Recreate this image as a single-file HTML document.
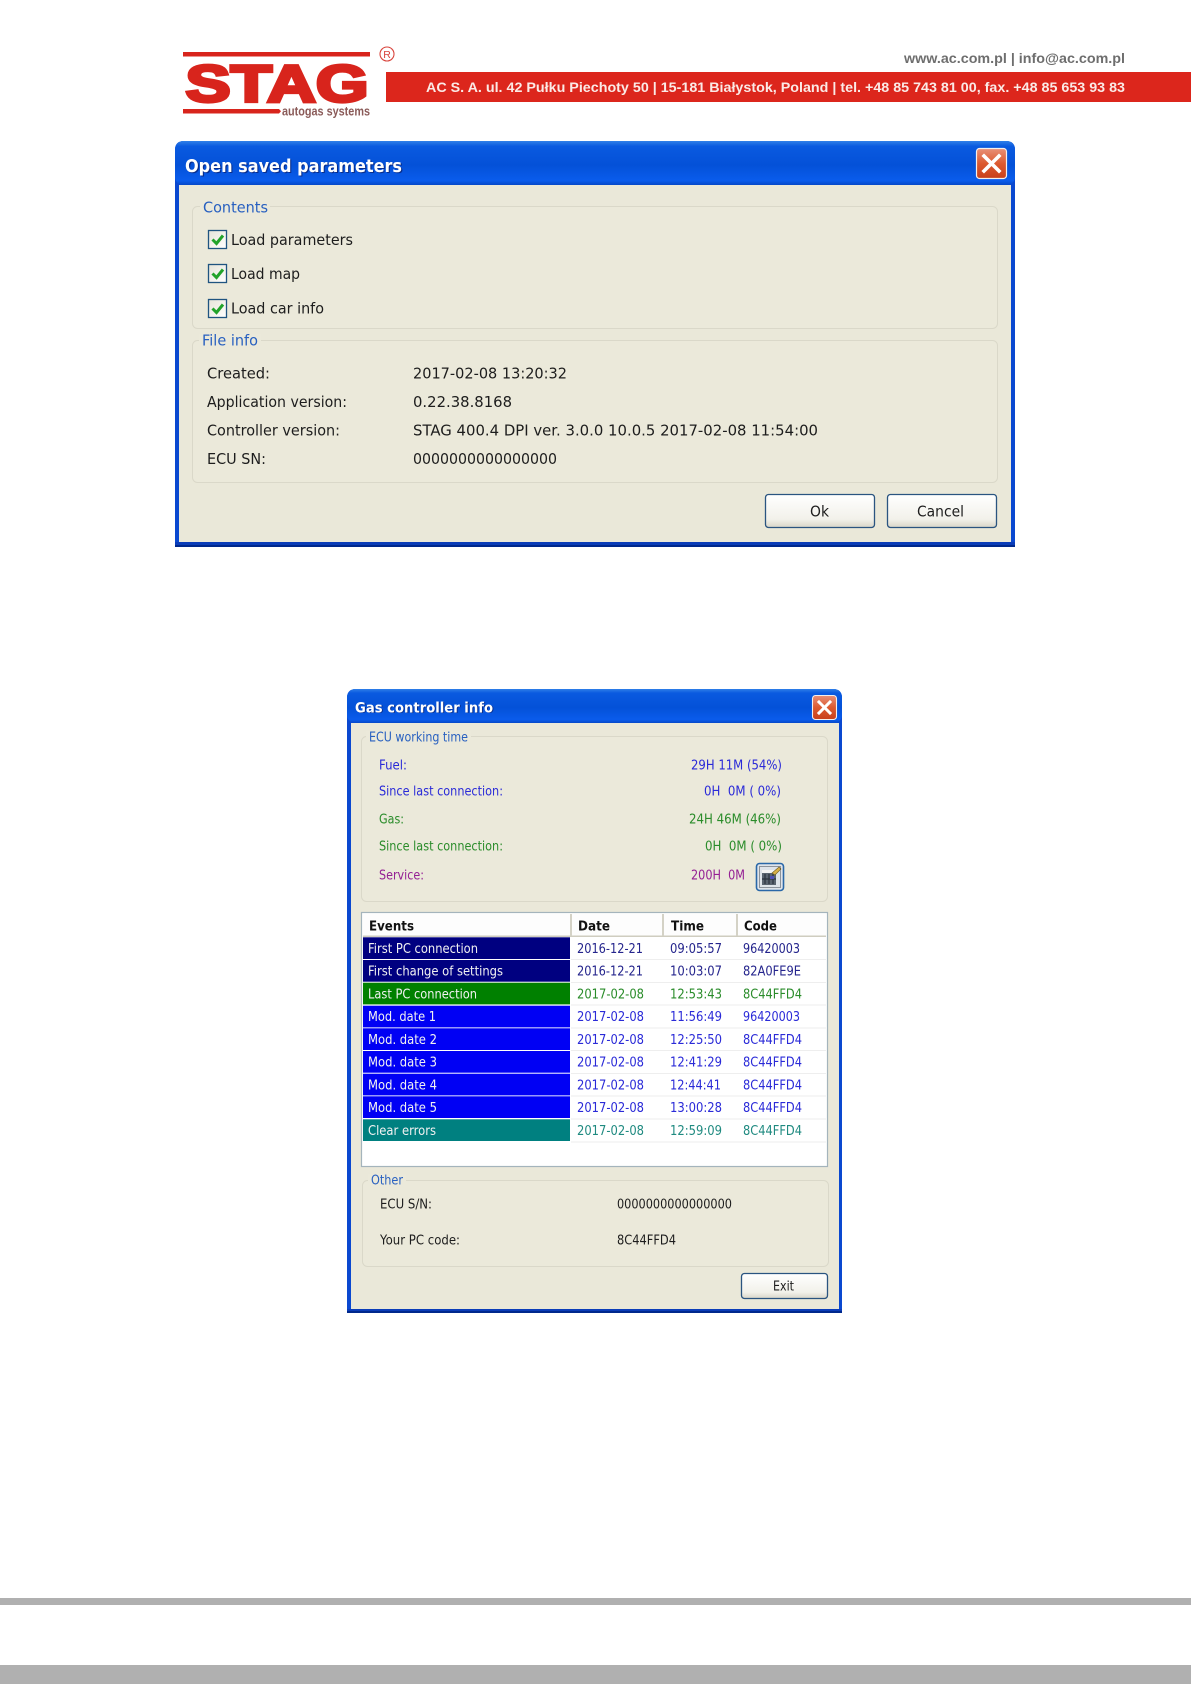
<!DOCTYPE html>
<html><head><meta charset="utf-8"><title>STAG</title>
<style>
html,body{margin:0;padding:0;background:#fff;width:1191px;height:1684px;overflow:hidden}
svg{display:block;filter:blur(.35px)}
text{font-family:"DejaVu Sans","Liberation Sans",sans-serif;white-space:pre}
text:not(.t):not(.lb):not(.l1):not(.l2):not(.b){transform:translateY(-1px)}
.a{font-size:15px;fill:#1d1d1d}
.b{font-size:13px;fill:#1d1d1d}
.l1{font-size:15px;fill:#2860c0}
.l2{font-size:13px;fill:#2860c0}
.t{font-weight:bold;fill:#fff}
.h{font-size:13px;font-weight:bold;fill:#111}
.w{font-size:13px;fill:#f2f2f2}
.bl{font-size:13px;fill:#2a2ad8}
.nv{font-size:13px;fill:#24248c}
.gr{font-size:13px;fill:#2a8c2a}
.te{font-size:13px;fill:#1f8a80}
.pu{font-size:13px;fill:#941f94}
.lb{font-family:"Liberation Sans",sans-serif;font-weight:bold}
</style></head><body>
<svg xmlns="http://www.w3.org/2000/svg" width="1191" height="1684" viewBox="0 0 1191 1684">
<defs>
<linearGradient id="tb" x1="0" y1="0" x2="0" y2="1"><stop offset="0" stop-color="#2f7fe8"/><stop offset=".12" stop-color="#0a5ae0"/><stop offset=".55" stop-color="#0451d8"/><stop offset=".9" stop-color="#0a5cec"/><stop offset="1" stop-color="#0648c8"/></linearGradient>
<linearGradient id="cl" x1="0" y1="0" x2="0" y2="1"><stop offset="0" stop-color="#e89078"/><stop offset=".5" stop-color="#dc5a30"/><stop offset="1" stop-color="#c8401c"/></linearGradient>
<linearGradient id="bt" x1="0" y1="0" x2="0" y2="1"><stop offset="0" stop-color="#ffffff"/><stop offset=".75" stop-color="#f2f1ea"/><stop offset="1" stop-color="#d8d5c8"/></linearGradient>
<linearGradient id="cb" x1="0" y1="0" x2="1" y2="1"><stop offset="0" stop-color="#e6e4d8"/><stop offset="1" stop-color="#ffffff"/></linearGradient>
</defs>

<!-- LOGO -->
<rect x="183" y="52" width="187" height="4.5" fill="#d8241c"/>
<text class="lb" x="185.500" y="101.500" font-size="52" textLength="183" lengthAdjust="spacingAndGlyphs" fill="#d8241c" stroke="#d8241c" stroke-width="3.2">STAG</text>
<path d="M183 109H279L281 111.2L279 113.5H183Z" fill="#d8241c"/>
<text class="lb" x="282" y="115.500" font-size="12.500" textLength="88" lengthAdjust="spacingAndGlyphs" fill="#8a5a58">autogas systems</text>
<circle cx="387" cy="54" r="7" fill="none" stroke="#d8443c" stroke-width="1.1"/>
<text class="lb" x="387" y="58" font-size="10.500" text-anchor="middle" fill="#d8443c" style="font-weight:normal">R</text>
<rect x="386" y="72" width="805" height="30" fill="#dc261c"/>
<text class="lb" x="426" y="92" font-size="14" textLength="699" lengthAdjust="spacingAndGlyphs" fill="#fbeae6">AC S. A. ul. 42 Pułku Piechoty 50 | 15-181 Białystok, Poland | tel. +48 85 743 81 00, fax. +48 85 653 93 83</text>
<text class="lb" x="904" y="63" font-size="14" textLength="221" lengthAdjust="spacingAndGlyphs" fill="#6e6e6e">www.ac.com.pl | info@ac.com.pl</text>

<!-- DIALOG 1 -->
<path d="M175 547V150Q175 141 184 141H1006Q1015 141 1015 150V547Z" fill="#0a48d0"/>
<rect x="175" y="141" width="840" height="44" rx="8" fill="url(#tb)"/>
<rect x="175" y="542" width="840" height="5" fill="#0a3cb8"/>
<rect x="175" y="545" width="840" height="2" fill="#00288c"/>
<rect x="179" y="185" width="832" height="357" fill="#eae8d9"/>
<text class="t" x="186.200" y="173.200" font-size="18" textLength="217" lengthAdjust="spacingAndGlyphs" style="fill:#0a2e8c">Open saved parameters</text>
<text class="t" x="185" y="172" font-size="18" textLength="217" lengthAdjust="spacingAndGlyphs">Open saved parameters</text>
<rect x="976.500" y="148.500" width="30" height="30" rx="3" fill="url(#cl)" stroke="#f4f0ee" stroke-width="1.2"/>
<path d="M984 156L999 171M999 156L984 171" stroke="#fff" stroke-width="3.6" stroke-linecap="square" fill="none"/>

<rect x="192.500" y="206.500" width="805" height="122" rx="5" fill="#ebe9da" stroke="#dad8c9"/>
<rect x="200" y="200" width="70" height="12" fill="#ebe9da"/>
<text class="l1" x="203" y="212.500" textLength="65" lengthAdjust="spacingAndGlyphs">Contents</text>

<g>
<rect x="208.500" y="230.500" width="18" height="18" fill="url(#cb)" stroke="#1f5480" stroke-width="1.3"/>
<path d="M212.500 239.500L216.500 243.500L223 235.500" fill="none" stroke="#22a32a" stroke-width="3"/>
<rect x="208.500" y="264.500" width="18" height="18" fill="url(#cb)" stroke="#1f5480" stroke-width="1.3"/>
<path d="M212.500 273.500L216.500 277.500L223 269.500" fill="none" stroke="#22a32a" stroke-width="3"/>
<rect x="208.500" y="299.500" width="18" height="18" fill="url(#cb)" stroke="#1f5480" stroke-width="1.3"/>
<path d="M212.500 308.500L216.500 312.500L223 304.500" fill="none" stroke="#22a32a" stroke-width="3"/>
</g>
<text class="a" x="231" y="246" textLength="122" lengthAdjust="spacingAndGlyphs">Load parameters</text>
<text class="a" x="231" y="280" textLength="69" lengthAdjust="spacingAndGlyphs">Load map</text>
<text class="a" x="231" y="314.500" textLength="93" lengthAdjust="spacingAndGlyphs">Load car info</text>

<rect x="192.500" y="340.500" width="805" height="142" rx="5" fill="#ebe9da" stroke="#dad8c9"/>
<rect x="199" y="334" width="62" height="12" fill="#ebe9da"/>
<text class="l1" x="202" y="345.500" textLength="56" lengthAdjust="spacingAndGlyphs">File info</text>
<text class="a" x="207" y="379.500" textLength="63" lengthAdjust="spacingAndGlyphs">Created:</text>
<text class="a" x="207" y="408" textLength="140" lengthAdjust="spacingAndGlyphs">Application version:</text>
<text class="a" x="207" y="436.500" textLength="133" lengthAdjust="spacingAndGlyphs">Controller version:</text>
<text class="a" x="207" y="465" textLength="59" lengthAdjust="spacingAndGlyphs">ECU SN:</text>
<text class="a" x="413" y="379.500" textLength="154" lengthAdjust="spacingAndGlyphs">2017-02-08 13:20:32</text>
<text class="a" x="413" y="408" textLength="99" lengthAdjust="spacingAndGlyphs">0.22.38.8168</text>
<text class="a" x="413" y="436.500" textLength="405" lengthAdjust="spacingAndGlyphs">STAG 400.4 DPI ver. 3.0.0 10.0.5 2017-02-08 11:54:00</text>
<text class="a" x="413" y="465" textLength="144" lengthAdjust="spacingAndGlyphs">0000000000000000</text>

<rect x="765.500" y="494.500" width="109" height="33" rx="3" fill="url(#bt)" stroke="#2a5480" stroke-width="1.3"/>
<rect x="887.500" y="494.500" width="109" height="33" rx="3" fill="url(#bt)" stroke="#2a5480" stroke-width="1.3"/>
<text class="a" x="810" y="517.500" textLength="19" lengthAdjust="spacingAndGlyphs">Ok</text>
<text class="a" x="917" y="517.500" textLength="47" lengthAdjust="spacingAndGlyphs">Cancel</text>

<!-- DIALOG 2 -->
<path d="M347 1313V698Q347 689 356 689H833Q842 689 842 698V1313Z" fill="#0a48d0"/>
<rect x="347" y="689" width="495" height="34" rx="8" fill="url(#tb)"/>
<rect x="347" y="1309" width="495" height="4" fill="#0a3cb8"/>
<rect x="347" y="1311" width="495" height="2" fill="#00288c"/>
<rect x="351" y="723" width="488" height="586" fill="#eae8d9"/>
<text class="t" x="356" y="713" font-size="14" textLength="138" lengthAdjust="spacingAndGlyphs" style="fill:#0a2e8c">Gas controller info</text>
<text class="t" x="355" y="712.500" font-size="14" textLength="138" lengthAdjust="spacingAndGlyphs">Gas controller info</text>
<rect x="812.500" y="695.500" width="24" height="24" rx="3" fill="url(#cl)" stroke="#f4f0ee" stroke-width="1.1"/>
<path d="M819 702L830 713M830 702L819 713" stroke="#fff" stroke-width="3" stroke-linecap="square" fill="none"/>

<rect x="361.500" y="736.500" width="466" height="165" rx="5" fill="#ebe9da" stroke="#dad8c9"/>
<rect x="366" y="731" width="105" height="11" fill="#ebe9da"/>
<text class="l2" x="369" y="741.500" textLength="99" lengthAdjust="spacingAndGlyphs">ECU working time</text>
<text class="bl" x="379" y="770.500" textLength="28" lengthAdjust="spacingAndGlyphs">Fuel:</text>
<text class="bl" x="379" y="796.500" textLength="124" lengthAdjust="spacingAndGlyphs">Since last connection:</text>
<text class="gr" x="379" y="824.500" textLength="25" lengthAdjust="spacingAndGlyphs">Gas:</text>
<text class="gr" x="379" y="851.500" textLength="124" lengthAdjust="spacingAndGlyphs">Since last connection:</text>
<text class="pu" x="379" y="880.500" textLength="45" lengthAdjust="spacingAndGlyphs">Service:</text>
<text class="bl" x="691" y="770.500" textLength="91" lengthAdjust="spacingAndGlyphs">29H 11M (54%)</text>
<text class="bl" x="704" y="796.500" textLength="77" lengthAdjust="spacingAndGlyphs">0H  0M ( 0%)</text>
<text class="gr" x="689" y="824.500" textLength="92" lengthAdjust="spacingAndGlyphs">24H 46M (46%)</text>
<text class="gr" x="705" y="851.500" textLength="77" lengthAdjust="spacingAndGlyphs">0H  0M ( 0%)</text>
<text class="pu" x="691" y="880.500" textLength="54" lengthAdjust="spacingAndGlyphs">200H  0M</text>

<!-- icon button -->
<rect x="756.500" y="863.500" width="27" height="27" rx="3" fill="#dfe4ea" stroke="#2a68a8" stroke-width="1.6"/>
<rect x="759.500" y="866.500" width="21" height="21" fill="none" stroke="#39424e" stroke-width="1" stroke-dasharray="1 1"/>
<path d="M762 870H776V885H762Z" fill="#5a6470"/>
<path d="M762 870H776V873H762Z" fill="#f4f4f4"/>
<path d="M765 874V884M769 874V884M773 874V884M762 879H776" stroke="#2c3440" stroke-width="1.2" fill="none"/>
<path d="M770 876H774V879H770Z" fill="#5050b8"/>
<path d="M772 873L779 867L781 869L775 875Z" fill="#d8b048" stroke="#6e5a20" stroke-width=".6"/>

<!-- list -->
<rect x="361.500" y="912.500" width="466" height="254" fill="#fff" stroke="#a4b4bc" stroke-width="1.2"/>
<rect x="363" y="914" width="463" height="22" fill="#fdfdfd"/>
<rect x="363" y="935.500" width="463" height="1.500" fill="#cfcdc0"/>
<rect x="570" y="914" width="2" height="22" fill="#d4d2c6"/>
<rect x="662" y="914" width="2" height="22" fill="#d4d2c6"/>
<rect x="736" y="914" width="2" height="22" fill="#d4d2c6"/>
<text class="h" x="369" y="931.500" textLength="45" lengthAdjust="spacingAndGlyphs">Events</text>
<text class="h" x="578" y="931.500" textLength="32" lengthAdjust="spacingAndGlyphs">Date</text>
<text class="h" x="671" y="931.500" textLength="33" lengthAdjust="spacingAndGlyphs">Time</text>
<text class="h" x="744" y="931.500" textLength="33" lengthAdjust="spacingAndGlyphs">Code</text>

<g fill="#eeeeee">
<rect x="571" y="959" width="255" height="1"/><rect x="571" y="982" width="255" height="1"/><rect x="571" y="1004.500" width="255" height="1"/><rect x="571" y="1027.500" width="255" height="1"/><rect x="571" y="1050" width="255" height="1"/><rect x="571" y="1073" width="255" height="1"/><rect x="571" y="1095.500" width="255" height="1"/><rect x="571" y="1118.500" width="255" height="1"/><rect x="571" y="1141.500" width="255" height="1"/>
</g>
<rect x="363" y="937.300" width="207" height="21.700" fill="#000080"/>
<rect x="363" y="960" width="207" height="21.700" fill="#000080"/>
<rect x="363" y="982.700" width="207" height="21.700" fill="#008000"/>
<rect x="363" y="1005.700" width="207" height="21.700" fill="#0000f4"/>
<rect x="363" y="1028.300" width="207" height="21.700" fill="#0000f4"/>
<rect x="363" y="1051" width="207" height="21.700" fill="#0000f4"/>
<rect x="363" y="1073.700" width="207" height="21.700" fill="#0000f4"/>
<rect x="363" y="1096.300" width="207" height="21.700" fill="#0000f4"/>
<rect x="363" y="1119.300" width="207" height="21.700" fill="#008080"/>

<text class="w" x="368" y="954" textLength="110" lengthAdjust="spacingAndGlyphs">First PC connection</text>
<text class="w" x="368" y="976.500" textLength="135" lengthAdjust="spacingAndGlyphs">First change of settings</text>
<text class="w" x="368" y="999.500" textLength="109" lengthAdjust="spacingAndGlyphs">Last PC connection</text>
<text class="w" x="368" y="1022" textLength="68" lengthAdjust="spacingAndGlyphs">Mod. date 1</text>
<text class="w" x="368" y="1045" textLength="69" lengthAdjust="spacingAndGlyphs">Mod. date 2</text>
<text class="w" x="368" y="1067.500" textLength="69" lengthAdjust="spacingAndGlyphs">Mod. date 3</text>
<text class="w" x="368" y="1090.500" textLength="69" lengthAdjust="spacingAndGlyphs">Mod. date 4</text>
<text class="w" x="368" y="1113" textLength="69" lengthAdjust="spacingAndGlyphs">Mod. date 5</text>
<text class="w" x="368" y="1136" textLength="68" lengthAdjust="spacingAndGlyphs">Clear errors</text>

<text class="nv" x="577" y="954" textLength="66" lengthAdjust="spacingAndGlyphs">2016-12-21</text>
<text class="nv" x="670" y="954" textLength="52" lengthAdjust="spacingAndGlyphs">09:05:57</text>
<text class="nv" x="743" y="954" textLength="57" lengthAdjust="spacingAndGlyphs">96420003</text>
<text class="nv" x="577" y="976.500" textLength="66" lengthAdjust="spacingAndGlyphs">2016-12-21</text>
<text class="nv" x="670" y="976.500" textLength="52" lengthAdjust="spacingAndGlyphs">10:03:07</text>
<text class="nv" x="743" y="976.500" textLength="58" lengthAdjust="spacingAndGlyphs">82A0FE9E</text>
<text class="gr" x="577" y="999.500" textLength="67" lengthAdjust="spacingAndGlyphs">2017-02-08</text>
<text class="gr" x="670" y="999.500" textLength="52" lengthAdjust="spacingAndGlyphs">12:53:43</text>
<text class="gr" x="743" y="999.500" textLength="59" lengthAdjust="spacingAndGlyphs">8C44FFD4</text>
<text class="bl" x="577" y="1022" textLength="67" lengthAdjust="spacingAndGlyphs">2017-02-08</text>
<text class="bl" x="670" y="1022" textLength="52" lengthAdjust="spacingAndGlyphs">11:56:49</text>
<text class="bl" x="743" y="1022" textLength="57" lengthAdjust="spacingAndGlyphs">96420003</text>
<text class="bl" x="577" y="1045" textLength="67" lengthAdjust="spacingAndGlyphs">2017-02-08</text>
<text class="bl" x="670" y="1045" textLength="52" lengthAdjust="spacingAndGlyphs">12:25:50</text>
<text class="bl" x="743" y="1045" textLength="59" lengthAdjust="spacingAndGlyphs">8C44FFD4</text>
<text class="bl" x="577" y="1067.500" textLength="67" lengthAdjust="spacingAndGlyphs">2017-02-08</text>
<text class="bl" x="670" y="1067.500" textLength="52" lengthAdjust="spacingAndGlyphs">12:41:29</text>
<text class="bl" x="743" y="1067.500" textLength="59" lengthAdjust="spacingAndGlyphs">8C44FFD4</text>
<text class="bl" x="577" y="1090.500" textLength="67" lengthAdjust="spacingAndGlyphs">2017-02-08</text>
<text class="bl" x="670" y="1090.500" textLength="51" lengthAdjust="spacingAndGlyphs">12:44:41</text>
<text class="bl" x="743" y="1090.500" textLength="59" lengthAdjust="spacingAndGlyphs">8C44FFD4</text>
<text class="bl" x="577" y="1113" textLength="67" lengthAdjust="spacingAndGlyphs">2017-02-08</text>
<text class="bl" x="670" y="1113" textLength="52" lengthAdjust="spacingAndGlyphs">13:00:28</text>
<text class="bl" x="743" y="1113" textLength="59" lengthAdjust="spacingAndGlyphs">8C44FFD4</text>
<text class="te" x="577" y="1136" textLength="67" lengthAdjust="spacingAndGlyphs">2017-02-08</text>
<text class="te" x="670" y="1136" textLength="52" lengthAdjust="spacingAndGlyphs">12:59:09</text>
<text class="te" x="743" y="1136" textLength="59" lengthAdjust="spacingAndGlyphs">8C44FFD4</text>

<!-- other -->
<rect x="362.500" y="1180.500" width="466" height="86" rx="5" fill="#ebe9da" stroke="#dad8c9"/>
<rect x="368" y="1174" width="38" height="11" fill="#ebe9da"/>
<rect x="368" y="1168" width="38" height="6" fill="#eae8d9"/>
<text class="l2" x="371" y="1184.500" textLength="32" lengthAdjust="spacingAndGlyphs">Other</text>
<text class="b" x="380" y="1208.500" textLength="52" lengthAdjust="spacingAndGlyphs">ECU S/N:</text>
<text class="b" x="380" y="1244.500" textLength="80" lengthAdjust="spacingAndGlyphs">Your PC code:</text>
<text class="b" x="617" y="1208.500" textLength="115" lengthAdjust="spacingAndGlyphs">0000000000000000</text>
<text class="b" x="617" y="1244.500" textLength="59" lengthAdjust="spacingAndGlyphs">8C44FFD4</text>
<rect x="741.500" y="1273.500" width="86" height="25" rx="3" fill="url(#bt)" stroke="#2a5480" stroke-width="1.3"/>
<text class="b" x="773" y="1290.500" textLength="21" lengthAdjust="spacingAndGlyphs">Exit</text>

<!-- footer -->
<rect x="0" y="1598" width="1191" height="7" fill="#b0b0b0"/>
<rect x="0" y="1665" width="1191" height="19" fill="#b0b0b0"/>
</svg>
</body></html>
